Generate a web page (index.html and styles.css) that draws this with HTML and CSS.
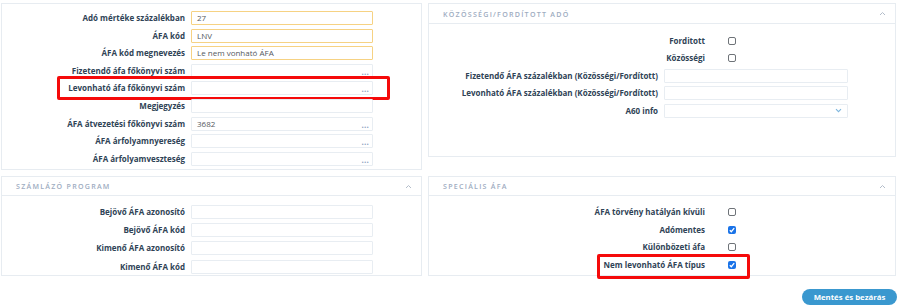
FILE: index.html
```html
<!DOCTYPE html>
<html lang="hu">
<head>
<meta charset="utf-8">
<title>ÁFA kód</title>
<link rel="stylesheet" href="styles.css">
</head>
<body>
<div class="page">
  <section class="panel panel-main">
    <div class="form form-left">
      <div class="row"><label class="lbl">Adó mértéke százalékban</label><div class="field req"><span class="val">27</span></div></div>
      <div class="row"><label class="lbl">ÁFA kód</label><div class="field req"><span class="val">LNV</span></div></div>
      <div class="row"><label class="lbl">ÁFA kód megnevezés</label><div class="field req"><span class="val">Le nem vonható ÁFA</span></div></div>
      <div class="row"><label class="lbl">Fizetendő áfa főkönyvi szám</label><div class="field"><span class="val"></span><span class="dots">...</span></div></div>
      <div class="row"><label class="lbl">Levonható áfa főkönyvi szám</label><div class="field"><span class="val"></span><span class="dots">...</span></div><span class="mark mark-a"></span></div>
      <div class="row"><label class="lbl">Megjegyzés</label><div class="field"><span class="val"></span></div></div>
      <div class="row"><label class="lbl">ÁFA átvezetési főkönyvi szám</label><div class="field"><span class="val">3682</span><span class="dots">...</span></div></div>
      <div class="row"><label class="lbl">ÁFA árfolyamnyereség</label><div class="field"><span class="val"></span><span class="dots">...</span></div></div>
      <div class="row"><label class="lbl">ÁFA árfolyamveszteség</label><div class="field"><span class="val"></span><span class="dots">...</span></div></div>
    </div>
  </section>

  <section class="panel panel-kozossegi">
    <header class="panel-head">
      <h2 class="panel-title">Közösségi/fordított adó</h2>
      <svg class="chev" width="7" height="5" viewBox="0 0 7 5"><polyline points="1,4 3.5,1.5 6,4" fill="none" stroke="#b3bdca" stroke-width="1"/></svg>
    </header>
    <div class="form form-right body-kozossegi">
      <div class="crow"><label class="lbl">Forditott</label><span class="cb"></span></div>
      <div class="crow"><label class="lbl">Közösségi</label><span class="cb"></span></div>
      <div class="row row-wide"><label class="lbl">Fizetendő ÁFA százalékban (Közösségi/Fordított)</label><div class="field"><span class="val"></span></div></div>
      <div class="row row-wide"><label class="lbl">Levonható ÁFA százalékban (Közösségi/Fordított)</label><div class="field"><span class="val"></span></div></div>
      <div class="row row-wide"><label class="lbl">A60 info</label><div class="field select"><span class="val"></span><svg class="sel-chev" width="7" height="5" viewBox="0 0 7 5"><polyline points="1,1.2 3.5,3.7 6,1.2" fill="none" stroke="#7db6de" stroke-width="1.1"/></svg></div></div>
    </div>
  </section>

  <section class="panel panel-low">
    <header class="panel-head">
      <h2 class="panel-title">Számlázó program</h2>
      <svg class="chev" width="7" height="5" viewBox="0 0 7 5"><polyline points="1,4 3.5,1.5 6,4" fill="none" stroke="#b3bdca" stroke-width="1"/></svg>
    </header>
    <div class="form form-left body-low">
      <div class="row"><label class="lbl">Bejövő ÁFA azonosító</label><div class="field"><span class="val"></span></div></div>
      <div class="row"><label class="lbl">Bejövő ÁFA kód</label><div class="field"><span class="val"></span></div></div>
      <div class="row"><label class="lbl">Kimenő ÁFA azonosító</label><div class="field"><span class="val"></span></div></div>
      <div class="row"><label class="lbl">Kimenő ÁFA kód</label><div class="field"><span class="val"></span></div></div>
    </div>
  </section>

  <section class="panel panel-low">
    <header class="panel-head">
      <h2 class="panel-title">Speciális ÁFA</h2>
      <svg class="chev" width="7" height="5" viewBox="0 0 7 5"><polyline points="1,4 3.5,1.5 6,4" fill="none" stroke="#b3bdca" stroke-width="1"/></svg>
    </header>
    <div class="form form-right body-low">
      <div class="crow"><label class="lbl">ÁFA törvény hatályán kívüli</label><span class="cb"></span></div>
      <div class="crow"><label class="lbl">Adómentes</label><span class="cb on"><svg width="8" height="8" viewBox="0 0 8 8"><polyline points="1.8,4.2 3.3,5.7 6.2,2.2" fill="none" stroke="#fff" stroke-width="1.3"/></svg></span></div>
      <div class="crow"><label class="lbl">Különbözeti áfa</label><span class="cb"></span></div>
      <div class="crow"><label class="lbl">Nem levonható ÁFA típus</label><span class="cb on"><svg width="8" height="8" viewBox="0 0 8 8"><polyline points="1.8,4.2 3.3,5.7 6.2,2.2" fill="none" stroke="#fff" stroke-width="1.3"/></svg></span><span class="mark mark-b"></span></div>
    </div>
  </section>
</div>
<div class="actions">
  <button class="btn" type="button">Mentés és bezárás</button>
</div>
</body>
</html>
```

FILE: styles.css
```css
* { box-sizing: border-box; }
html, body { margin: 0; padding: 0; background: #fff; }
body {
  font-family: "Open Sans", "Liberation Sans", sans-serif;
  font-size: 8px;
  color: #2f4356;
  width: 900px;
  height: 308px;
  overflow: hidden;
}

.page {
  display: grid;
  grid-template-columns: 421px 468px;
  column-gap: 6px;
  row-gap: 6px;
  padding: 3px 0 0 1px;
  align-items: start;
}

.panel {
  border: 1px solid #e7ecf1;
  background: #fff;
}

.panel-main { height: 167px; padding: 7px 0 0 0; }
.panel-kozossegi { height: 154px; }
.panel-low { height: 100px; }

.panel-head {
  height: 20px;
  border-bottom: 1px solid #e7ecf1;
  display: flex;
  align-items: center;
  justify-content: space-between;
  padding: 0 9px 0 14px;
}
.panel-low .panel-head { height: 19px; }

.panel-title {
  margin: 0;
  font-size: 7.1px;
  font-weight: 600;
  letter-spacing: 1.25px;
  text-transform: uppercase;
  color: #9eacbf;
}
.chev { display: block; }

.form { display: flex; flex-direction: column; }
.form-left { row-gap: 3.6px; }
.form-right { row-gap: 3.5px; }
.body-kozossegi { padding-top: 9.5px; }
.body-low { padding-top: 9px; }
.panel-low .form-left { row-gap: 4.2px; }
.panel-low .form-right { row-gap: 3.7px; }

.row {
  position: relative;
  display: grid;
  grid-template-columns: 183px 182px;
  column-gap: 6px;
  height: 14px;
  align-items: center;
}
.row-wide { grid-template-columns: 229px 184px; }

.crow {
  position: relative;
  display: grid;
  grid-template-columns: 276px 8px;
  column-gap: 23px;
  height: 14px;
  align-items: center;
}

.lbl {
  text-align: right;
  font-weight: 700;
  white-space: nowrap;
  line-height: 14px;
  color: #2f4356;
}

.field {
  height: 14px;
  border: 1px solid #e8edf2;
  border-radius: 1px;
  display: flex;
  justify-content: space-between;
  align-items: center;
  padding: 0 3px 0 5px;
  color: #55595e;
  line-height: 12px;
  background: #fff;
}
.field.req { border-color: #f6d283; }
.val { white-space: nowrap; font-size: 8px; font-weight: 400; }

.dots {
  align-self: flex-end;
  font-weight: 700;
  color: #8ea2bf;
  font-size: 8px;
  line-height: 8px;
  letter-spacing: 0.2px;
  padding-bottom: 1px;
}

.select { padding-right: 5px; }
.sel-chev { display: block; }

.cb {
  width: 8px;
  height: 8px;
  border: 1px solid #6e7378;
  border-radius: 2px;
  background: #fff;
  display: block;
}
.cb.on {
  border: none;
  background: #1a73e8;
}
.cb.on svg { display: block; }

.mark {
  position: absolute;
  border: 3px solid #f50a0a;
  border-radius: 2px;
  pointer-events: none;
}
.mark-a { left: 55px; top: -5.7px; width: 333px; height: 24px; }
.mark-b { left: 168px; top: -4px; width: 153px; height: 25px; }

.actions {
  display: flex;
  justify-content: flex-end;
  padding: 13px 3px 0 0;
}
.btn {
  width: 95px;
  height: 16px;
  border: none;
  border-radius: 8px;
  background: #3a98cf;
  color: #fff;
  font-family: "Open Sans", "Liberation Sans", sans-serif;
  font-size: 7.8px;
  font-weight: 700;
  padding: 0;
  line-height: 16px;
}
```
